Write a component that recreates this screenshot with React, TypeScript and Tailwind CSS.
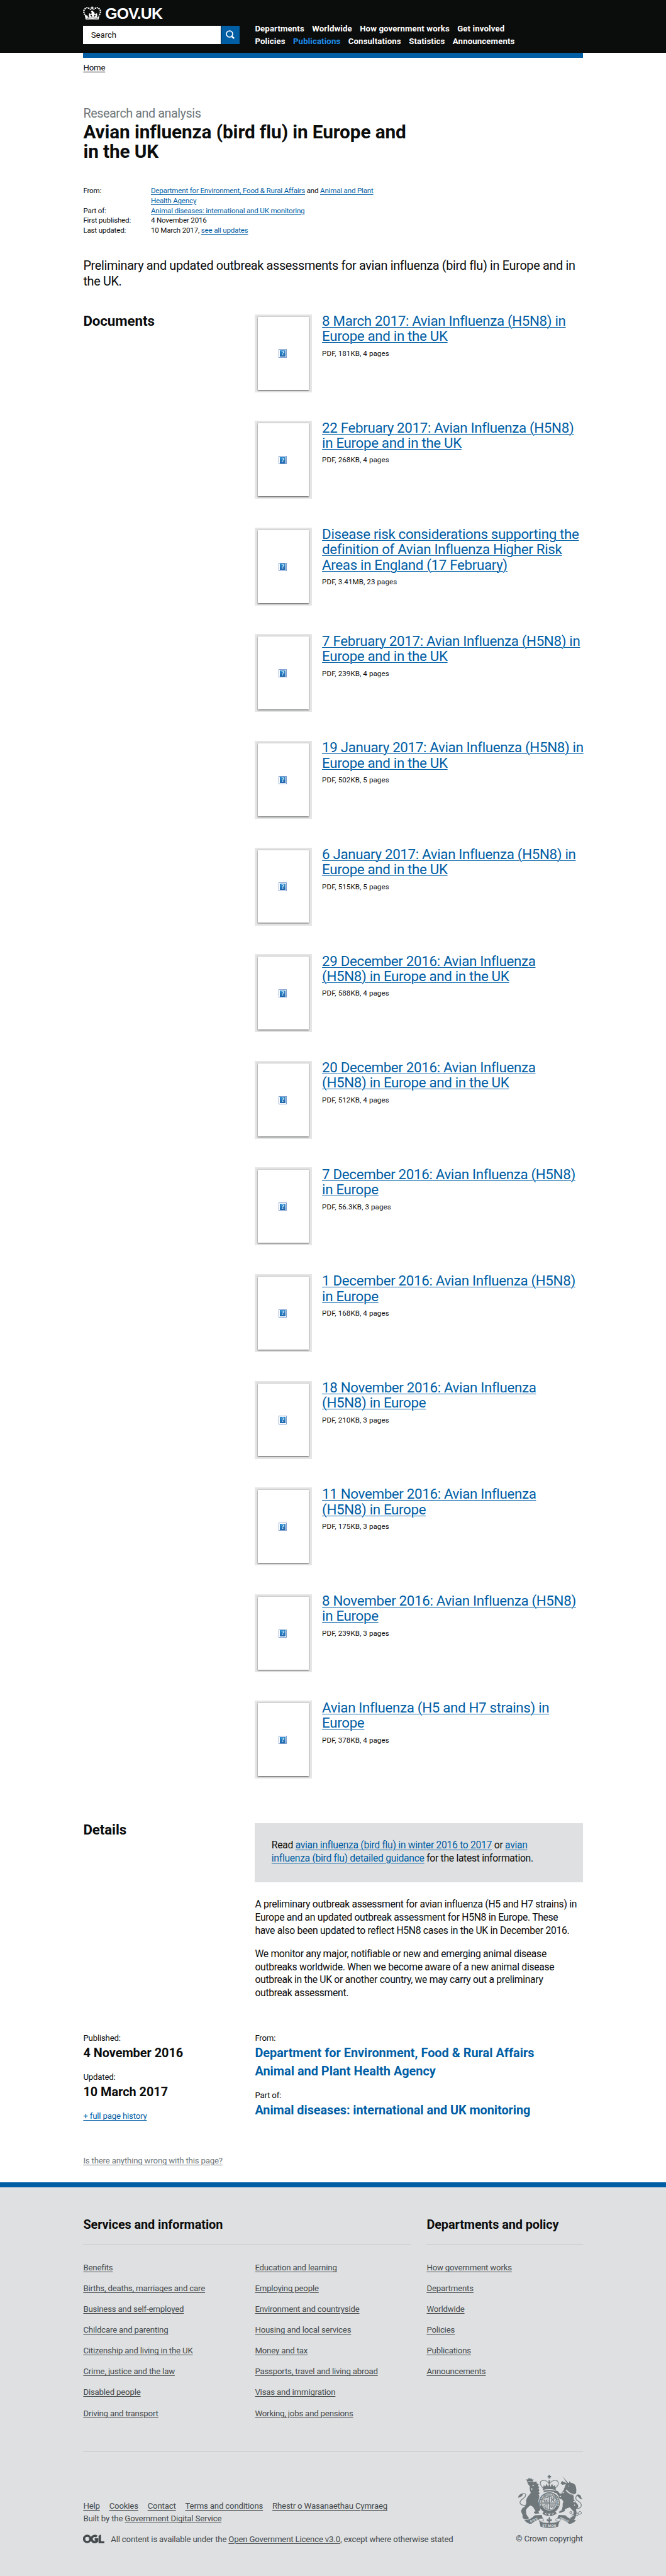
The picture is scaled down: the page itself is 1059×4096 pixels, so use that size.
import React from "react";

const documents: { title: string; meta: string }[] = [
  { title: "8 March 2017: Avian Influenza (H5N8) in\nEurope and in the UK", meta: "PDF, 181KB, 4 pages" },
  { title: "22 February 2017: Avian Influenza (H5N8)\nin Europe and in the UK", meta: "PDF, 268KB, 4 pages" },
  {
    title: "Disease risk considerations supporting the\ndefinition of Avian Influenza Higher Risk\nAreas in England (17 February)",
    meta: "PDF, 3.41MB, 23 pages",
  },
  { title: "7 February 2017: Avian Influenza (H5N8) in\nEurope and in the UK", meta: "PDF, 239KB, 4 pages" },
  { title: "19 January 2017: Avian Influenza (H5N8) in\nEurope and in the UK", meta: "PDF, 502KB, 5 pages" },
  { title: "6 January 2017: Avian Influenza (H5N8) in\nEurope and in the UK", meta: "PDF, 515KB, 5 pages" },
  { title: "29 December 2016: Avian Influenza\n(H5N8) in Europe and in the UK", meta: "PDF, 588KB, 4 pages" },
  { title: "20 December 2016: Avian Influenza\n(H5N8) in Europe and in the UK", meta: "PDF, 512KB, 4 pages" },
  { title: "7 December 2016: Avian Influenza (H5N8)\nin Europe", meta: "PDF, 56.3KB, 3 pages" },
  { title: "1 December 2016: Avian Influenza (H5N8)\nin Europe", meta: "PDF, 168KB, 4 pages" },
  { title: "18 November 2016: Avian Influenza\n(H5N8) in Europe", meta: "PDF, 210KB, 3 pages" },
  { title: "11 November 2016: Avian Influenza\n(H5N8) in Europe", meta: "PDF, 175KB, 3 pages" },
  { title: "8 November 2016: Avian Influenza (H5N8)\nin Europe", meta: "PDF, 239KB, 3 pages" },
  { title: "Avian Influenza (H5 and H7 strains) in\nEurope", meta: "PDF, 378KB, 4 pages" },
];

const navRows = [
  ["Departments", "Worldwide", "How government works", "Get involved"],
  ["Policies", "Publications", "Consultations", "Statistics", "Announcements"],
];

const services = [
  [
    "Benefits",
    "Births, deaths, marriages and care",
    "Business and self-employed",
    "Childcare and parenting",
    "Citizenship and living in the UK",
    "Crime, justice and the law",
    "Disabled people",
    "Driving and transport",
  ],
  [
    "Education and learning",
    "Employing people",
    "Environment and countryside",
    "Housing and local services",
    "Money and tax",
    "Passports, travel and living abroad",
    "Visas and immigration",
    "Working, jobs and pensions",
  ],
];

const policy = ["How government works", "Departments", "Worldwide", "Policies", "Publications", "Announcements"];

function Link({ children }: { children: React.ReactNode }) {
  return (
    <a href="#" className="text-[#005ea5] underline decoration-1 underline-offset-2">
      {children}
    </a>
  );
}

function FooterLink({ children }: { children: React.ReactNode }) {
  return (
    <a href="#" className="underline decoration-1 underline-offset-2">
      {children}
    </a>
  );
}

function Crown() {
  return (
    <svg viewBox="16 36 107 78" className="h-[26px] w-[35px]" fill="#fff">
      <path d="M66 37h7v5h5v6h-5v6h-7v-6h-5v-6h5z" />
      <circle cx="69.500" cy="66" r="6" />
      <circle cx="50" cy="46" r="4.500" />
      <circle cx="59" cy="53" r="4" />
      <circle cx="80" cy="53" r="4" />
      <circle cx="89" cy="46" r="4.500" />
      <circle cx="39" cy="44" r="4.500" />
      <circle cx="100" cy="44" r="4.500" />
      <circle cx="29" cy="49" r="4.500" />
      <circle cx="110" cy="49" r="4.500" />
      <circle cx="21.500" cy="59" r="4.500" />
      <circle cx="117.500" cy="59" r="4.500" />
      <circle cx="21" cy="71" r="4.500" />
      <circle cx="118" cy="71" r="4.500" />
      <circle cx="25" cy="82" r="4.500" />
      <circle cx="114" cy="82" r="4.500" />
      <path d="M26 86l6 28q37-5 75 0l6-28-5 4-3 9q-6 2-10-2 6 1 6-5 0-4-4-5l4-6-6-5-5 7 3 5q-5 1-7 7l-8 1q6-5 4-12 4 2 5 6l5-9q-6-5-10-2l2-5q-4-6-8-7h-3q-4 1-7 7l1 5q-4-3-9 2l5 9q1-4 5-6-2 7 4 12l-8-1q-2-6-7-7l3-5-5-7-6 5 4 6q-4 1-4 5 0 6 6 5-4 4-10 2l-3-9z" />
      <path d="M37 105q32-6 65 0v3q-33-5-65 0z" fill="#0b0c0c" opacity=".75" />
    </svg>
  );
}

function SearchIcon() {
  return (
    <svg viewBox="0 0 18 18" className="size-[18px]" fill="none" stroke="#fff">
      <circle cx="7.300" cy="7.300" r="6" strokeWidth="2" />
      <path d="M11.500 11.500l4.500 4.500" strokeWidth="3" />
    </svg>
  );
}

function Thumbnail() {
  return (
    <div className="mt-[2px] h-[150px] w-[109px] shrink-0 bg-[#e6e6e6] p-[5px]">
      <div className="flex h-[140px] w-[99px] items-center justify-center bg-white shadow-[0_2px_2px_rgba(11,12,12,0.4),0_0_2px_1px_rgba(11,12,12,0.15)]">
        <div className="mt-px mr-[2px] flex size-4 items-center justify-center border border-[#7f9fd0] bg-white p-px">
          <div className="flex size-3 items-center justify-center bg-linear-to-b from-[#2b8bcc] to-[#1f66ad] font-['Liberation_Serif',serif] text-[12px] leading-none font-bold text-[#e4f0fa]">
            ?
          </div>
        </div>
      </div>
    </div>
  );
}

function OglLogo() {
  return (
    <svg viewBox="30 63 122 50" className="h-[17px] w-[41px]">
      <g fill="none" stroke="#454a4c" strokeWidth="13">
        <circle cx="54" cy="88" r="18" />
        <path d="M109 75a18 18 0 1 0 2 25v-9H97" />
      </g>
      <path d="M119 70l14-7v38h19v12h-33z" fill="#454a4c" />
    </svg>
  );
}

function RoyalArms() {
  return (
    <svg viewBox="105 110 375 306" className="h-[102px] w-[125px] overflow-visible" fill="#6f777b" stroke="none">
      <path d="M160 150l-5-15 9 3 3-8 7 3 2-8 2 8 7-3 3 8 9-3-5 15q-16-5-32 0z" />
      <path d="M160 153q17-7 34-1l22-3-2 8 13 9-5 4 8 14-5 2 6 16-5 4 7 14-7 3q8 12 1 26l-2 18 8 10-5 8 9 24q-4 10-12 14l6 10-22 2q-12-4-10-12l10-2-14-24q-14-12-20-8-16 14-22 24l2 24q6 14 16 22l-6 8q-12 4-24-2l-8-10q2-10 0-16-10-16-6-26 6-14 20-20l8-20q-4-20 10-38l16-20q-8-20-6-38l-8-12z" />
      <path d="M188 172l12-4-3 8zM170 174l8 2-5 4zM184 186l8 6-7 9z" fill="#dee0e2" />
      <path d="M150 286q-28 2-31-14-1-12 18-25 16-12 15-23-4-9-18-5" fill="none" stroke="#6f777b" strokeWidth="4" />
      <path d="M105 250q6-6 5-17 9-14 26-15-1 16-17 21-8 1-14 11z" />
      <g fill="none" stroke="#6f777b" strokeWidth="5">
        <path d="M252 186q-24-22-12-38 20-15 46 10 2-7 2-10 0 3 2 10 26-25 46-10 12 16-12 38" strokeDasharray="5 1.500" />
        <path d="M288 140v44" strokeWidth="9" strokeDasharray="5 2" />
      </g>
      <path d="M284 111h8v6h6v8h-6v8h-8v-8h-6v-8h6z" />
      <path d="M252 186l4-16 9 8 7-16 9 18 7-16 7 16 9-18 7 16 9-8 4 16 2 12q-38-10-76 0z" />
      <path d="M254 202q34-9 68 0l-2 8q-32-8-64 0z" />
      <circle cx="288" cy="272" r="61" />
      <circle cx="288" cy="273" r="43" fill="#dee0e2" />
      <g fill="none" stroke="#6f777b" strokeWidth="3">
        <circle cx="288" cy="273" r="39" />
        <path d="M288 234v78M249 273h78" strokeWidth="5" />
        <path d="M258 250h24M256 258h26M258 266h24M264 242h18" strokeWidth="5" strokeDasharray="9 2" />
        <path d="M296 244l22 20M296 264l20-22M302 240v26M314 248v18" strokeWidth="4" />
        <path d="M258 282q4 24 22 26M268 280v24M276 280v26M262 280h18" />
        <path d="M294 284h28M294 292h26M296 300h18" strokeWidth="5" strokeDasharray="9 2" />
      </g>
      <path id="garter" d="M258 309a47 47 0 1 1 60 0" fill="none" />
      <text fontSize="14" fontWeight="700" fill="#dee0e2" fontFamily="Roboto" textAnchor="middle">
        <textPath href="#garter" startOffset="50%">
          HONI SOIT QUI MAL Y PENSE
        </textPath>
      </text>
      <path d="M256 322q32 24 66-2l8 14q-40 28-82 2z" />
      <path d="M264 333l9 5M304 338l9-5" stroke="#dee0e2" strokeWidth="5" />
      <circle cx="288" cy="341" r="5" fill="#dee0e2" />
      <path d="M363 117l35 42-6 4z" />
      <path d="M390 160l12-4 2-9 8 9q20 2 28 18 6 18 3 42l-14 8q-2 14 1 30l10 16q18 14 14 28l-12 12 4 22-8 26-8 14-18-4-4-10 18-10 2-26-22-24-26 10-4 12-26 10q-8 0-7-6l16-10 6-22q-2-16 4-28l-8-12-16-6-4-14-12-16-12-2-2-10 10-4 14 6 10 14 14-4q8-20 14-34l6-18-20 4-10-8 8-14z" />
      <path d="M384 198q20 26 46 28" fill="none" stroke="#dee0e2" strokeWidth="9" />
      <path d="M382 202q20 24 44 26" fill="none" stroke="#6f777b" strokeWidth="5" strokeDasharray="6 3" />
      <circle cx="397" cy="175" r="2.500" fill="#dee0e2" />
      <path d="M448 306q28-4 24-24-3-12-22-22-15-12-6-27 8-10 17-4 3 5-2 10" fill="none" stroke="#6f777b" strokeWidth="4" />
      <path d="M445 226q22-6 26 12 0 8 9 12-16 2-20-8-10-8-15-16z" />
      <g fill="#dee0e2" stroke="#6f777b" strokeWidth="3.500">
        <circle cx="368" cy="212" r="6" />
        <circle cx="352" cy="235" r="5" />
        <circle cx="431" cy="265" r="6" />
        <circle cx="434" cy="285" r="5" />
        <circle cx="412" cy="328" r="6" />
        <circle cx="424" cy="344" r="6" />
        <circle cx="448" cy="338" r="7" />
        <circle cx="465" cy="330" r="8" />
      </g>
      <path d="M144 372q30 2 60-28l40-2 6 18q-40 10-66 33-22 1-40-21zM442 372q-30 2-62-28l-38-2-8 18q42 10 68 33 22 1 40-21z" />
      <path d="M232 380q2-8-6-10 2-12 24-8 8 6 4 14zM348 380q-2-8 6-10-2-12-24-8-8 6-4 14z" fill="#dee0e2" stroke="#6f777b" strokeWidth="3" />
      <path d="M230 378q56 22 116 0l-8 32q-50 12-100 0z" />
      <path d="M288 352l5 9-2 9q10-8 12 0 0 8-10 8v10h-10v-10q-10 0-10-8 2-8 12 0l-2-9z" />
      <g fill="#dee0e2" fontSize="18" fontWeight="700" fontFamily="Roboto" textAnchor="middle">
        <text x="288" y="411" fontSize="20" letterSpacing="1">ET MON</text>
        <text transform="translate(202 377) rotate(-24)" letterSpacing="2">DIEU</text>
        <text transform="translate(372 376) rotate(26)" letterSpacing="1">DROIT</text>
      </g>
    </svg>
  );
}

function Header() {
  return (
    <header className="h-[101px] bg-[#0b0c0c] text-white">
      <div className="mx-auto flex w-[960px]">
        <div className="w-[330px] pt-3">
          <div className="flex h-[37px]">
            <Crown />
            <span className="ml-[7px] font-['Liberation_Sans',sans-serif] text-[30px] leading-[29px] font-bold tracking-[-0.031em]">
              GOV.UK
            </span>
          </div>
          <div className="flex h-9 gap-px">
            <div className="flex w-[264px] items-center bg-white pl-[15px] text-base tracking-[-0.005em] text-[#0b0c0c]">
              Search
            </div>
            <button className="flex w-[35px] items-center justify-center bg-[#005ea5]">
              <SearchIcon />
            </button>
          </div>
        </div>
        <nav className="pt-11">
          {navRows.map((row) => (
            <div key={row[0]} className="flex gap-[15px] text-base leading-6 font-bold tracking-[0.009em]">
              {row.map((label) => (
                <a key={label} href="#" className={label === "Publications" ? "text-[#1d8feb]" : "text-white"}>
                  {label}
                </a>
              ))}
            </div>
          ))}
        </nav>
      </div>
    </header>
  );
}

function Footer() {
  return (
    <footer className="mt-[31.5px] border-t-[10px] border-[#005ea5] bg-[#dee0e2] text-base leading-5 tracking-[-0.0138em] text-[#454a4c]">
      <div className="mx-auto w-[960px] pt-[57.8px]">
        <div className="flex gap-[30px]">
          <section className="w-[630px]">
            <h2 className="border-b border-[#bfc1c3] pb-[22.2px] text-2xl leading-[30px] font-bold tracking-[-0.004em] text-[#0b0c0c]">
              Services and information
            </h2>
            <div className="flex pt-[33.5px]">
              {services.map((column) => (
                <ul key={column[0]} className="flex w-[330px] flex-col gap-5 whitespace-nowrap last:w-[300px]">
                  {column.map((label) => (
                    <li key={label}>
                      <FooterLink>{label}</FooterLink>
                    </li>
                  ))}
                </ul>
              ))}
            </div>
          </section>
          <section className="w-[300px]">
            <h2 className="border-b border-[#bfc1c3] pb-[22.2px] text-2xl leading-[30px] font-bold tracking-[-0.004em] text-[#0b0c0c]">
              Departments and policy
            </h2>
            <ul className="flex flex-col gap-5 pt-[33.5px]">
              {policy.map((label) => (
                <li key={label}>
                  <FooterLink>{label}</FooterLink>
                </li>
              ))}
            </ul>
          </section>
        </div>
        <div className="mt-[61.5px] flex justify-between border-t border-[#bfc1c3] pb-[59.5px]">
          <div className="pt-[93.5px]">
            <div className="flex gap-[18px] leading-6">
              {["Help", "Cookies", "Contact", "Terms and conditions", "Rhestr o Wasanaethau Cymraeg"].map((label) => (
                <FooterLink key={label}>{label}</FooterLink>
              ))}
            </div>
            <p className="leading-6">
              Built by the <FooterLink>Government Digital Service</FooterLink>
            </p>
            <div className="mt-[18px] flex gap-3">
              <OglLogo />
              <p>
                All content is available under the <FooterLink>Open Government Licence v3.0</FooterLink>, except where
                otherwise stated
              </p>
            </div>
          </div>
          <div className="flex flex-col items-end pt-[45px]">
            <RoyalArms />
            <p className="mt-[11px]">© Crown copyright</p>
          </div>
        </div>
      </div>
    </footer>
  );
}

export default function App() {
  return (
    <div className="bg-white font-['Roboto','Liberation_Sans',sans-serif] text-[#0b0c0c] [zoom:0.8273]">
      <Header />
      <main className="mx-auto w-[960px]">
        <div className="h-[10px] bg-[#005ea5]" />
        <p className="pt-[10.5px] text-base leading-5 tracking-[-0.0138em]">
          <a href="#" className="underline decoration-1 underline-offset-2">
            Home
          </a>
        </p>

        <p className="mt-[62.500px] text-2xl leading-[30px] tracking-[-0.024em] text-[#6f777b]">Research and analysis</p>
        <h1 className="w-[640px] text-4xl leading-[38.5px] font-bold tracking-[-0.004em]">
          Avian influenza (bird flu) in Europe and
          <br />
          in the UK
        </h1>

        <dl className="mt-[47px] grid w-[600px] grid-cols-[130px_1fr] text-sm leading-[19px] tracking-[-0.016em]">
          <dt>From:</dt>
          <dd>
            <Link>Department for Environment, Food &amp; Rural Affairs</Link> and{" "}
            <Link>
              Animal and Plant
              <br />
              Health Agency
            </Link>
          </dd>
          <dt>Part of:</dt>
          <dd>
            <Link>Animal diseases: international and UK monitoring</Link>
          </dd>
          <dt>First published:</dt>
          <dd>4 November 2016</dd>
          <dt>Last updated:</dt>
          <dd>
            10 March 2017, <Link>see all updates</Link>
          </dd>
        </dl>

        <p className="mt-11 text-2xl leading-[30px] tracking-[-0.0168em]">
          Preliminary and updated outbreak assessments for avian influenza (bird flu) in Europe and in
          <br />
          the UK.
        </p>

        <section className="mt-[45px] flex">
          <h2 className="w-[330px] text-[27px] leading-[29.4px] font-bold tracking-[-0.004em]">Documents</h2>
          <ul className="w-[630px]">
            {documents.map((doc) => (
              <li key={doc.title} className="flex h-[205px]">
                <Thumbnail />
                <div className="ml-5">
                  <h3 className="text-[27px] leading-[29.4px] tracking-[-0.015em] whitespace-pre">
                    <Link>{doc.title}</Link>
                  </h3>
                  <p className="mt-[10px] text-sm leading-[19px] tracking-[0.007em]">{doc.meta}</p>
                </div>
              </li>
            ))}
          </ul>
        </section>

        <section className="mt-[30px] flex">
          <h2 className="w-[330px] text-[27px] leading-[29.4px] font-bold tracking-[-0.004em]">Details</h2>
          <div className="w-[630px] pt-[2px] text-[19px] leading-[25px] tracking-[-0.0195em] whitespace-nowrap">
            <div className="h-[114px] bg-[#dee0e2] px-8 pt-[30.5px]">
              Read <Link>avian influenza (bird flu) in winter 2016 to 2017</Link> or{" "}
              <Link>
                avian
                <br />
                influenza (bird flu) detailed guidance
              </Link>{" "}
              for the latest information.
            </div>
            <p className="mt-[30.5px]">
              A preliminary outbreak assessment for avian influenza (H5 and H7 strains) in
              <br />
              Europe and an updated outbreak assessment for H5N8 in Europe. These
              <br />
              have also been updated to reflect H5N8 cases in the UK in December 2016.
            </p>
            <p className="mt-5">
              We monitor any major, notifiable or new and emerging animal disease
              <br />
              outbreaks worldwide. When we become aware of a new animal disease
              <br />
              outbreak in the UK or another country, we may carry out a preliminary
              <br />
              outbreak assessment.
            </p>
          </div>
        </section>

        <section className="mt-[65px] flex text-base leading-5 tracking-[-0.0138em]">
          <div className="w-[330px]">
            <p>Published:</p>
            <p className="mt-[4.3px] text-2xl leading-[30px] font-bold tracking-normal">4 November 2016</p>
            <p className="mt-[20.7px]">Updated:</p>
            <p className="mt-[4.3px] text-2xl leading-[30px] font-bold tracking-normal">10 March 2017</p>
            <p className="mt-[20.7px]">
              <Link>+ full page history</Link>
            </p>
          </div>
          <div className="w-[630px]">
            <p>From:</p>
            <div className="mt-[4.3px] flex flex-col gap-[5px] text-2xl leading-[30px] font-bold tracking-[0.001em] text-[#005ea5]">
              <a href="#">Department for Environment, Food &amp; Rural Affairs</a>
              <a href="#">Animal and Plant Health Agency</a>
            </div>
            <p className="mt-[20.7px]">Part of:</p>
            <p className="mt-[4.3px] text-2xl leading-[30px] font-bold tracking-[-0.003em] text-[#005ea5]">
              <a href="#">Animal diseases: international and UK monitoring</a>
            </p>
          </div>
        </section>

        <p className="mt-[65px] text-base leading-5 tracking-[-0.0138em] text-[#6f777b]">
          <a href="#" className="underline decoration-1 underline-offset-2">
            Is there anything wrong with this page?
          </a>
        </p>
      </main>
      <Footer />
    </div>
  );
}
